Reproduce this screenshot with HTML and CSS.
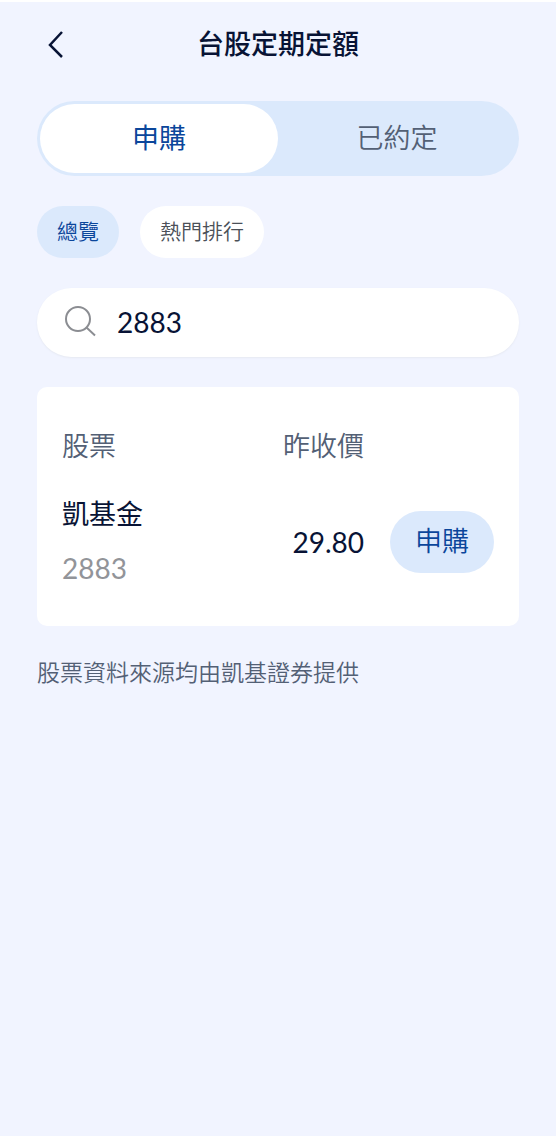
FILE: index.html
```html
<!DOCTYPE html>
<html lang="zh-Hant">
<head>
  <meta charset="utf-8">
  <meta name="viewport" content="width=device-width, initial-scale=1">
  <title>台股定期定額</title>
  <link rel="stylesheet" href="styles.css">
</head>
<body>
  <div class="screen">
    <header class="topbar">
      <button class="back" type="button" aria-label="返回">
        <svg viewBox="0 0 18 28" width="18" height="28" aria-hidden="true"><path d="M16 2 4 15l12 12"/></svg>
      </button>
      <h1 class="title">台股定期定額</h1>
    </header>
    <main class="content">
      <div class="segment" role="tablist">
        <button class="segment-tab segment-tab-active" type="button" role="tab" aria-selected="true">申購</button>
        <button class="segment-tab" type="button" role="tab" aria-selected="false">已約定</button>
      </div>
      <div class="chips">
        <button class="chip chip-active" type="button">總覽</button>
        <button class="chip" type="button">熱門排行</button>
      </div>
      <label class="search">
        <svg class="search-icon" viewBox="0 0 32 32" width="32" height="32" aria-hidden="true"><circle cx="13" cy="13" r="12"/><path d="m21.500 21.500 8.500 8"/></svg>
        <input class="search-input" type="text" value="2883" aria-label="搜尋股票">
      </label>
      <section class="card">
        <table class="stocks">
          <thead>
            <tr><th scope="col">股票</th><th class="price-col" scope="col">昨收價</th><td class="action-col"></td></tr>
          </thead>
          <tbody>
            <tr>
              <td><div class="stock-name">凱基金</div><div class="stock-code">2883</div></td>
              <td class="price-col">29.80</td>
              <td class="action-col"><button class="buy" type="button">申購</button></td>
            </tr>
          </tbody>
        </table>
      </section>
      <p class="source">股票資料來源均由凱基證券提供</p>
    </main>
  </div>
</body>
</html>
```
FILE: styles.css
```css
* {
  box-sizing: border-box;
}

body {
  margin: 0;
  background: #fff;
  color: #081335;
  font-family: Lato, "Noto Sans CJK TC", sans-serif;
  font-size: 27px;
  font-weight: 350;
  line-height: 40px;
}

button,
input {
  margin: 0;
  padding: 0;
  border: 0;
  background: none;
  color: inherit;
  font: inherit;
}

.screen {
  min-height: 100vh;
  border-top: 2px solid #fff;
  border-bottom: 8px solid #fff;
  background: #f1f4ff;
  background-clip: padding-box;
}

.topbar {
  display: grid;
  grid-template-columns: 36px 1fr 36px;
  align-items: center;
  height: 84px;
  padding: 0 37px;
}

.back {
  display: flex;
  justify-content: center;
}

.back svg {
  fill: none;
  stroke: #081335;
  stroke-width: 2.500;
}

.title {
  margin: 0;
  font-size: 27px;
  font-weight: 500;
  text-align: center;
}

.content {
  display: flex;
  flex-direction: column;
  gap: 30px;
  padding: 15px 37px;
}

.segment {
  display: flex;
  height: 75px;
  padding: 3px;
  border-radius: 38px;
  background: #dbe9fc;
}

.segment-tab {
  flex: 1;
  padding-bottom: 2px;
  border-radius: 35px;
  color: #536075;
}

.segment-tab-active {
  background: #fff;
  color: #0b469b;
  font-weight: 400;
}

.chips {
  display: flex;
  gap: 21px;
}

.chip {
  height: 52px;
  padding: 0 20px 2px;
  border-radius: 26px;
  background: #fff;
  color: #4b5058;
  font-size: 21px;
}

.chip-active {
  background: #dbe9fc;
  color: #0b469b;
}

.search {
  display: flex;
  align-items: center;
  gap: 20px;
  height: 69px;
  padding: 0 28px 2px;
  border-radius: 35px;
  background: #fff;
  box-shadow: 0 1px 2px #e6e9f2;
}

.search-icon {
  flex: none;
  fill: none;
  stroke: #8b8d92;
  stroke-width: 2;
}

.search-input {
  flex: 1;
  min-width: 0;
  outline: 0;
  font-size: 28px;
  font-weight: 400;
}

.card {
  padding: 39px 25px 36px;
  border-radius: 10px;
  background: #fff;
}

.stocks {
  width: 100%;
  border-collapse: collapse;
}

.stocks th,
.stocks td {
  padding: 0;
  text-align: left;
}

.stocks th {
  padding-bottom: 28px;
  color: #536075;
  font-weight: 350;
}

.stocks .price-col {
  width: 130px;
  text-align: right;
}

.stocks td.price-col {
  font-size: 28px;
  font-weight: 400;
}

.stocks .action-col {
  width: 130px;
  text-align: right;
}

.stock-name {
  font-weight: 400;
}

.stock-code {
  padding-top: 14px;
  padding-bottom: 2px;
  color: #929499;
  font-size: 28px;
  font-weight: 400;
}

.buy {
  display: inline-block;
  height: 62px;
  padding: 0 25px 2px;
  border-radius: 31px;
  background: #dbe9fc;
  color: #0b469b;
  vertical-align: middle;
}

.source {
  margin: 0;
  padding-top: 1px;
  color: #536075;
  font-size: 23px;
  line-height: 30px;
}
```
